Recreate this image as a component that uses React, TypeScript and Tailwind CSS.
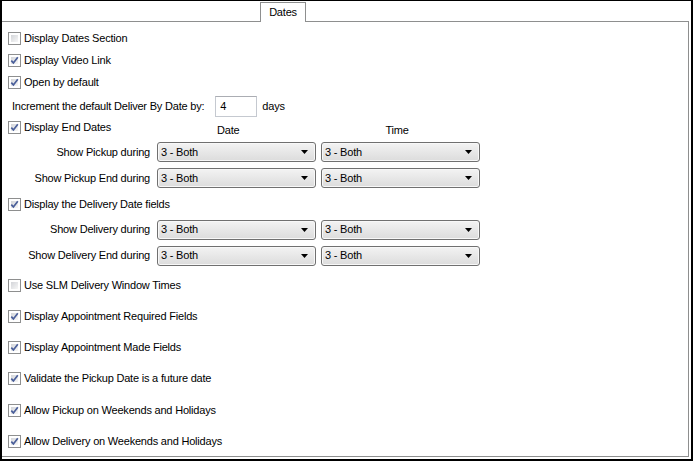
import React from "react";

const font = "font-['Liberation_Sans',Arial,sans-serif] text-[11px] tracking-[-0.2px] text-black";

function Box({ checked }: { checked: boolean }) {
  return (
    <span className="relative flex h-[13px] w-[13px] shrink-0 border border-[#8e8f8f] bg-white">
      <span className="absolute inset-[2px] bg-gradient-to-br from-[#d3d5d9] to-[#f7f7f7]" />
      {checked && (
        <svg className="absolute left-[1px] top-[1px]" width="9" height="9" viewBox="0 0 9 9">
          <path d="M1.3 4.6 L3.4 6.9 L7.8 1.2" fill="none" stroke="#4a5f9a" strokeWidth="1.7" />
        </svg>
      )}
    </span>
  );
}

function Check({ checked, label }: { checked: boolean; label: string }) {
  return (
    <div className="flex items-center gap-[3px] pl-[6px]">
      <Box checked={checked} />
      <span className="leading-[13px]">{label}</span>
    </div>
  );
}

function Select() {
  return (
    <div className="flex h-[20px] w-[159px] shrink-0 items-center justify-between rounded-[3px] border border-[#707070] bg-gradient-to-b from-[#f3f3f3] to-[#dcdcdc] pl-[3px] pr-[7px] shadow-[inset_0_0_0_1px_#f8f8f8]">
      <span className="leading-[13px]">3 - Both</span>
      <svg width="7" height="4" viewBox="0 0 7 4">
        <path d="M0 0H7L3.5 4Z" fill="#000" />
      </svg>
    </div>
  );
}

function SelectRow({ label, h }: { label: string; h: string }) {
  return (
    <div className={`flex items-center ${h}`}>
      <span className="w-[148px] text-right leading-[13px]">{label}</span>
      <div className="ml-[7px] flex gap-[5px]">
        <Select />
        <Select />
      </div>
    </div>
  );
}

export default function App() {
  return (
    <div className={`${font} flex h-[461px] w-[693px] flex-col border-b-2 border-l-2 border-r-2 border-t border-black bg-white`}>
      <div className="flex h-[21px] shrink-0 items-end">
        <div className="h-[20px] w-[258px] border-b border-[#8e8f8f]" />
        <div className="flex h-[20px] w-[46px] items-center justify-center border-l border-r border-t border-[#8e8f8f] bg-white pb-[1px]">
          <span className="leading-[13px]">Dates</span>
        </div>
        <div className="mr-[2px] h-[20px] flex-1 border-b border-[#8e8f8f]" />
      </div>
      <div className="mb-[2px] mr-[2px] flex flex-1 flex-col overflow-hidden border-b border-r border-[#8e8f8f] pt-[5px]">
        <div className="flex h-[22px] items-center"><Check checked={false} label="Display Dates Section" /></div>
        <div className="flex h-[22px] items-center"><Check checked label="Display Video Link" /></div>
        <div className="flex h-[23px] items-center"><Check checked label="Open by default" /></div>
        <div className="flex h-[24px] items-center pl-[10px]">
          <span className="leading-[13px]">Increment the default Deliver By Date by:</span>
          <div className="ml-[11px] flex h-[21px] w-[42px] items-center border border-[#c5c9d0] border-t-[#abadb3] bg-white pl-[4px]">
            <span className="leading-[13px]">4</span>
          </div>
          <span className="ml-[5px] leading-[13px]">days</span>
        </div>
        <div className="flex h-[21px] items-start">
          <div className="mt-[3px] w-[155px]"><Check checked label="Display End Dates" /></div>
          <span className="ml-[60px] mt-[6px] leading-[13px]">Date</span>
          <span className="ml-[146px] mt-[6px] leading-[13px]">Time</span>
        </div>
        <SelectRow label="Show Pickup during" h="h-[26px]" />
        <SelectRow label="Show Pickup End during" h="h-[26px]" />
        <div className="flex h-[26px] items-center"><Check checked label="Display the Delivery Date fields" /></div>
        <SelectRow label="Show Delivery during" h="h-[25px]" />
        <SelectRow label="Show Delivery End during" h="h-[27px]" />
        <div className="h-[1px]" />
        <div className="flex h-[31px] items-center"><Check checked={false} label="Use SLM Delivery Window Times" /></div>
        <div className="flex h-[31px] items-center"><Check checked label="Display Appointment Required Fields" /></div>
        <div className="flex h-[31px] items-center"><Check checked label="Display Appointment Made Fields" /></div>
        <div className="flex h-[31px] items-center"><Check checked label="Validate the Pickup Date is a future date" /></div>
        <div className="flex h-[32px] items-center"><Check checked label="Allow Pickup on Weekends and Holidays" /></div>
        <div className="flex h-[30px] items-center"><Check checked label="Allow Delivery on Weekends and Holidays" /></div>
      </div>
    </div>
  );
}
